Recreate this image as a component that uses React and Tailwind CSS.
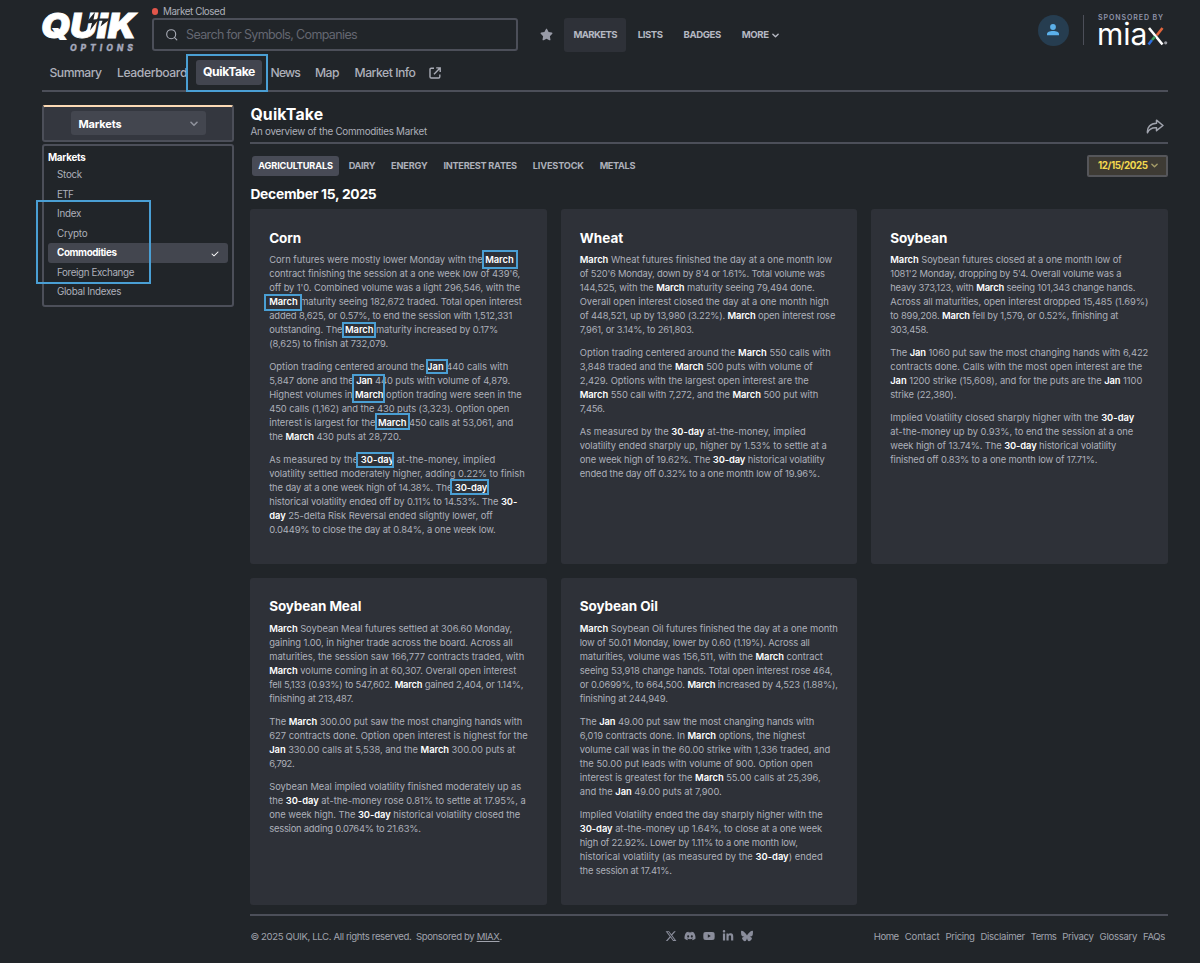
import React, { useLayoutEffect, useRef, useState } from "react";
import { FiSearch } from "react-icons/fi";
import {
  FaStar,
  FaCheck,
  FaDiscord,
  FaYoutube,
  FaLinkedinIn,
  FaXTwitter,
  FaBluesky,
} from "react-icons/fa6";

const navItems = [
  { label: "MARKETS", w: 43.5, active: true },
  { label: "LISTS", w: 25 },
  { label: "BADGES", w: 37.5 },
  { label: "MORE", w: 27, more: true },
];

const marketTypes = [
  { label: "Stock", w: 25 },
  { label: "ETF", w: 16 },
  { label: "Index", w: 24 },
  { label: "Crypto", w: 30.5 },
  { label: "Commodities", w: 59.5, active: true },
  { label: "Foreign Exchange", w: 77 },
  { label: "Global Indexes", w: 64 },
];

const tabs = [
  { label: "AGRICULTURALS", w: 74.5, active: true },
  { label: "DAIRY", w: 26.5 },
  { label: "ENERGY", w: 36.5 },
  { label: "INTEREST RATES", w: 73.5 },
  { label: "LIVESTOCK", w: 51 },
  { label: "METALS", w: 35.5 },
];

const footerLinks = [
  ["Home", 25],
  ["Contact", 35],
  ["Pricing", 29],
  ["Disclaimer", 44.5],
  ["Terms", 25.5],
  ["Privacy", 31.5],
  ["Glossary", 37.5],
  ["FAQs", 22],
];

// Each line is [text, width]; **word** is shown highlighted.
const reports = [
  {
    title: "Corn",
    titleWidth: 32,
    marked: true,
    paragraphs: [
      [
        ["Corn futures were mostly lower Monday with the **March**", 244.5],
        ["contract finishing the session at a one week low of 439'6,", 251],
        ["off by 1'0. Combined volume was a light 296,546, with the", 251],
        ["**March** maturity seeing 182,672 traded. Total open interest", 252.5],
        ["added 8,625, or 0.57%, to end the session with 1,512,331", 243],
        ["outstanding. The **March** maturity increased by 0.17%", 229],
        ["(8,625) to finish at 732,079.", 119],
      ],
      [
        ["Option trading centered around the **Jan** 440 calls with", 239],
        ["5,847 done and the **Jan** 440 puts with volume of 4,879.", 241],
        ["Highest volumes in **March** option trading were seen in the", 252.5],
        ["450 calls (1,162) and the 430 puts (3,323). Option open", 240],
        ["interest is largest for the **March** 450 calls at 53,061, and", 244],
        ["the **March** 430 puts at 28,720.", 132],
      ],
      [
        ["As measured by the **30-day** at-the-money, implied", 226],
        ["volatility settled moderately higher, adding 0.22% to finish", 255.5],
        ["the day at a one week high of 14.38%. The **30-day**", 218],
        ["historical volatility ended off by 0.11% to 14.53%. The **30-**", 248],
        ["**day** 25-delta Risk Reversal ended slightly lower, off", 223.5],
        ["0.0449% to close the day at 0.84%, a one week low.", 226.5],
      ],
    ],
  },
  {
    title: "Wheat",
    titleWidth: 43.5,
    paragraphs: [
      [
        ["**March** Wheat futures finished the day at a one month low", 252.5],
        ["of 520'6 Monday, down by 8'4 or 1.61%. Total volume was", 245],
        ["144,525, with the **March** maturity seeing 79,494 done.", 235],
        ["Overall open interest closed the day at a one month high", 249],
        ["of 448,521, up by 13,980 (3.22%). **March** open interest rose", 255.5],
        ["7,961, or 3.14%, to 261,803.", 114],
      ],
      [
        ["Option trading centered around the **March** 550 calls with", 251],
        ["3,848 traded and the **March** 500 puts with volume of", 233],
        ["2,429. Options with the largest open interest are the", 229],
        ["**March** 550 call with 7,272, and the **March** 500 put with", 238.5],
        ["7,456.", 25],
      ],
      [
        ["As measured by the **30-day** at-the-money, implied", 226],
        ["volatility ended sharply up, higher by 1.53% to settle at a", 247],
        ["one week high of 19.62%. The **30-day** historical volatility", 245],
        ["ended the day off 0.32% to a one month low of 19.96%.", 240],
      ],
    ],
  },
  {
    title: "Soybean",
    titleWidth: 57,
    paragraphs: [
      [
        ["**March** Soybean futures closed at a one month low of", 231.5],
        ["1081'2 Monday, dropping by 5'4. Overall volume was a", 231],
        ["heavy 373,123, with **March** seeing 101,343 change hands.", 245],
        ["Across all maturities, open interest dropped 15,485 (1.69%)", 258],
        ["to 899,208. **March** fell by 1,579, or 0.52%, finishing at", 228],
        ["303,458.", 38],
      ],
      [
        ["The **Jan** 1060 put saw the most changing hands with 6,422", 258],
        ["contracts done. Calls with the most open interest are the", 252],
        ["**Jan** 1200 strike (15,608), and for the puts are the **Jan** 1100", 252],
        ["strike (22,380).", 66],
      ],
      [
        ["Implied Volatility closed sharply higher with the **30-day**", 244],
        ["at-the-money up by 0.93%, to end the session at a one", 243],
        ["week high of 13.74%. The **30-day** historical volatility", 226],
        ["finished off 0.83% to a one month low of 17.71%.", 207],
      ],
    ],
  },
  {
    title: "Soybean Meal",
    titleWidth: 92,
    paragraphs: [
      [
        ["**March** Soybean Meal futures settled at 306.60 Monday,", 243],
        ["gaining 1.00, in higher trade across the board. Across all", 243.5],
        ["maturities, the session saw 166,777 contracts traded, with", 255],
        ["**March** volume coming in at 60,307. Overall open interest", 247],
        ["fell 5,133 (0.93%) to 547,602. **March** gained 2,404, or 1.14%,", 254],
        ["finishing at 213,487.", 84],
      ],
      [
        ["The **March** 300.00 put saw the most changing hands with", 253],
        ["627 contracts done. Option open interest is highest for the", 258.5],
        ["**Jan** 330.00 calls at 5,538, and the **March** 300.00 puts at", 246],
        ["6,792.", 25],
      ],
      [
        ["Soybean Meal implied volatility finished moderately up as", 252],
        ["the **30-day** at-the-money rose 0.81% to settle at 17.95%, a", 256.5],
        ["one week high. The **30-day** historical volatility closed the", 251],
        ["session adding 0.0764% to 21.63%.", 151.5],
      ],
    ],
  },
  {
    title: "Soybean Oil",
    titleWidth: 78,
    paragraphs: [
      [
        ["**March** Soybean Oil futures finished the day at a one month", 258],
        ["low of 50.01 Monday, lower by 0.60 (1.19%). Across all", 230],
        ["maturities, volume was 156,511, with the **March** contract", 243],
        ["seeing 53,918 change hands. Total open interest rose 464,", 253],
        ["or 0.0699%, to 664,500. **March** increased by 4,523 (1.88%),", 258],
        ["finishing at 244,949.", 88],
      ],
      [
        ["The **Jan** 49.00 put saw the most changing hands with", 234.5],
        ["6,019 contracts done. In **March** options, the highest", 225.5],
        ["volume call was in the 60.00 strike with 1,336 traded, and", 250.5],
        ["the 50.00 put leads with volume of 900. Option open", 233],
        ["interest is greatest for the **March** 55.00 calls at 25,396,", 241],
        ["and the **Jan** 49.00 puts at 7,900.", 142],
      ],
      [
        ["Implied Volatility ended the day sharply higher with the", 243],
        ["**30-day** at-the-money up 1.64%, to close at a one week", 242.5],
        ["high of 22.92%. Lower by 1.11% to a one month low,", 218],
        ["historical volatility (as measured by the **30-day**) ended", 243],
        ["the session at 17.41%.", 92],
      ],
    ],
  },
];

// Tracks the text in or out so that it fills exactly w pixels.
const Fit = ({ w, children, className = "" }) => {
  const ref = useRef(null);
  const [spacing, setSpacing] = useState(0);

  useLayoutEffect(() => {
    const el = ref.current;
    const natural = el.getBoundingClientRect().width;
    setSpacing((prev) => prev + (w - natural) / el.textContent.length);
  }, [w]);

  return (
    <span className={`block shrink-0 whitespace-nowrap ${className}`} style={{ width: w }}>
      <span ref={ref} style={{ letterSpacing: spacing }}>
        {children}
      </span>
    </span>
  );
};

const highlight = (text) =>
  text.split("**").map((part, i) =>
    i % 2 ? (
      <strong key={i} className="font-semibold text-white">
        {part}
      </strong>
    ) : (
      part
    )
  );

const Chevron = ({ className }) => (
  <svg viewBox="0 0 8 6" className={className} fill="none" stroke="currentColor" strokeWidth="1.6">
    <path d="M1 1.3 4 4.3 7 1.3" strokeLinecap="round" strokeLinejoin="round" />
  </svg>
);

const Logo = () => (
  <svg viewBox="0 0 96 42" className="mt-[11px] h-[42px] w-24 shrink-0 overflow-visible font-['Inter']">
    <text
      x="-1"
      y="26.5"
      textLength="95"
      lengthAdjust="spacingAndGlyphs"
      fill="#fff"
      stroke="#fff"
      strokeWidth="0.8"
      fontStyle="italic"
      fontWeight="900"
      fontSize="34"
    >
      QUIK
    </text>
    {/* bolt cut between the U and the I */}
    <path d="M43.5 12.5 53 1 51.500 8.500 57 8 48 19.500 50 12Z" fill="#212529" />
    <path d="M55 7.500H67L66 9.800 58.500 15.500 60.500 9.700H54.500Z" fill="#212529" />
    <text
      x="28"
      y="39.5"
      textLength="63"
      fill="#a3a7bb"
      stroke="#a3a7bb"
      strokeWidth="0.3"
      fontSize="8.6"
      fontStyle="italic"
      fontWeight="800"
    >
      OPTIONS
    </text>
  </svg>
);

const MiaxLogo = () => (
  <svg viewBox="0 0 70 26" className="h-[26px] w-[70px] overflow-visible font-['Inter']">
    <text x="-1" y="23.5" fill="#fff" fontSize="30" fontWeight="400" textLength="50.5" lengthAdjust="spacingAndGlyphs">
      mia
    </text>
    <path d="M51 7 64.500 23.500" stroke="#fff" strokeWidth="2.6" />
    <path d="M58.800 14.200 64.500 7" stroke="#e2653c" strokeWidth="2.6" />
    <path d="M50.500 23.500 54 19" stroke="#2f6fe0" strokeWidth="2.6" />
    <path d="M54 19 57 15.600" stroke="#3f9e62" strokeWidth="2.6" />
    <circle cx="67.7" cy="21.8" r="1.6" fill="#9a9ca3" />
  </svg>
);

const Header = () => (
  <header className="h-[92px] border-b-2 border-[#4c4f59]">
    <div className="flex h-[55px] items-start">
      <Logo />
      <div className="ml-[13.500px] w-[366px] pt-[5px]">
        <div className="flex h-[13px] items-center gap-[5px] text-[9.800px] leading-3">
          <span className="size-[6.500px] rounded-full bg-[#e2564b]" />
          <Fit w={62}>Market Closed</Fit>
        </div>
        <div className="flex h-[33px] items-center rounded-[3px] border-2 border-[#4c4f59] pl-[11px]">
          <FiSearch className="size-[13.500px] text-[#a9acb6]" />
          <Fit w={171} className="ml-2 pt-px text-[12.500px] text-[#646771]">
            Search for Symbols, Companies
          </Fit>
        </div>
      </div>
      <FaStar className="mt-7 ml-[22.500px] size-[13px] text-[#989ba7]" />
      <nav className="mt-[17.500px] ml-[11px] flex text-[9.600px] font-bold text-[#b5b8c2]">
        {navItems.map((item) => (
          <div
            key={item.label}
            className={`mr-0.5 flex h-[34px] items-center rounded-[3px] px-[9.400px] pt-0.5 ${
              item.active ? "bg-[#2e3138]" : ""
            }`}
          >
            <Fit w={item.w}>{item.label}</Fit>
            {item.more && <Chevron className="ml-[3px] w-[7px]" />}
          </div>
        ))}
      </nav>
      <div className="mt-[14.500px] ml-auto flex">
        <div className="flex size-[31px] items-center justify-center rounded-full bg-[#263d50]">
          <svg viewBox="0 0 12 12" className="size-3" fill="#5bb0ea">
            <circle cx="6" cy="3" r="2.9" />
            <path d="M0 11.300V10c0-2 2.500-3 6-3s6 1 6 3v1.300Z" />
          </svg>
        </div>
        <div className="ml-3.5 h-[30px] w-[1.500px] bg-[#4c4f59]" />
        <div className="ml-3.5 w-[70px]">
          <Fit w={66} className="text-[7px] leading-[6px] font-semibold text-[#8f94aa]">
            SPONSORED BY
          </Fit>
          <MiaxLogo />
        </div>
      </div>
    </div>
    <nav className="flex h-[35px] items-center text-[12.200px] font-medium">
      <Fit w={52} className="ml-[7.500px] pt-px">Summary</Fit>
      <Fit w={70} className="ml-[15.500px] pt-px">Leaderboard</Fit>
      <div className="relative ml-[9px] flex h-[25px] w-[66px] items-center justify-center rounded-[3px] bg-[#42454f] font-bold text-white">
        <Fit w={52}>QuikTake</Fit>
        <div className="absolute -top-[6px] -left-[10px] h-[38px] w-[82px] border-2 border-[#4a9fd4]" />
      </div>
      <Fit w={29.5} className="ml-[8.500px] pt-px">News</Fit>
      <Fit w={24} className="ml-[15px] pt-px">Map</Fit>
      <Fit w={61} className="ml-[15.500px] pt-px">Market Info</Fit>
      <svg
        viewBox="0 0 12 12"
        className="ml-[13.500px] size-3"
        fill="none"
        stroke="#a9acb6"
        strokeWidth="1.4"
      >
        <path d="M5 1.200H2.200a1.200 1.200 0 0 0-1.200 1.200v7.400A1.200 1.200 0 0 0 2.200 11h7.400a1.200 1.200 0 0 0 1.200-1.200V7.500" />
        <path d="M7.200.900h4v4M11 1.100 5 7.200" />
      </svg>
    </nav>
  </header>
);

const Sidebar = () => (
  <aside className="w-48 shrink-0 pt-[12.500px]">
    <div className="flex h-[37.500px] items-center justify-center rounded-[3px] border-2 border-t-[2.500px] border-[#4c4f59] border-t-[#fbd9b4] bg-[#34373f]">
      <div className="flex h-6 w-[135px] items-center justify-between rounded-[3px] bg-[#43464f] px-2 pt-px text-[11px] font-bold text-white">
        <Fit w={43}>Markets</Fit>
        <Chevron className="w-2 text-[#8f929c]" />
      </div>
    </div>
    <div className="relative mt-0.5 h-[163px] rounded-[3px] border-2 border-[#4c4f59] px-1 pt-1">
      <Fit w={37.5} className="text-[9.800px] leading-[15px] font-bold text-white">
        Markets
      </Fit>
      {marketTypes.map((type) => (
        <div
          key={type.label}
          className={`flex h-[19.500px] items-center justify-between rounded-[3px] px-[9px] pt-0.5 text-[9.800px] ${
            type.active ? "bg-[#43464f] font-bold text-white" : ""
          }`}
        >
          <Fit w={type.w}>{type.label}</Fit>
          {type.active && <FaCheck className="size-2" />}
        </div>
      ))}
      <div className="absolute top-[54px] -left-[8px] h-[84px] w-[115px] border-2 border-[#4a9fd4]" />
    </div>
  </aside>
);

const CornMarks = () => (
  <>
    <div className="absolute top-[41px] left-[232px] h-[19px] w-9 border-2 border-[#4a9fd4]" />
    <div className="absolute top-[85px] left-[13.500px] h-[17px] w-[38px] border-2 border-[#4a9fd4]" />
    <div className="absolute top-[113px] left-[92px] h-4 w-[33.500px] border-2 border-[#4a9fd4]" />
    <div className="absolute top-[150px] left-[176px] h-[15px] w-[21.500px] border-2 border-[#4a9fd4]" />
    <div className="absolute top-[164.500px] left-[102px] h-[29px] w-[33px] border-2 border-[#4a9fd4]" />
    <div className="absolute top-[204px] left-[125px] h-[17px] w-[35px] border-2 border-[#4a9fd4]" />
    <div className="absolute top-[243px] left-[106px] h-[16px] w-[38px] border-2 border-[#4a9fd4]" />
    <div className="absolute top-[270px] left-[200px] h-[16px] w-[38.500px] border-2 border-[#4a9fd4]" />
  </>
);

const ReportCard = ({ report }) => (
  <article className="relative rounded-[3px] bg-[#2e3138] px-[18.800px] pt-[18.500px] text-[9.400px] leading-[13.960px]">
    <Fit w={report.titleWidth} className="text-[13.500px] leading-5 font-bold text-white">
      {report.title}
    </Fit>
    <div className="mt-[5.800px] space-y-[9.300px]">
      {report.paragraphs.map((lines, i) => (
        <p key={i}>
          {lines.map(([text, w]) => (
            <Fit key={text} w={w}>
              {highlight(text)}
            </Fit>
          ))}
        </p>
      ))}
    </div>
    {report.marked && <CornMarks />}
  </article>
);

const Footer = () => (
  <footer className="mt-[9px] flex h-11 items-center border-t-2 border-[#4c4f59] text-[9.600px] text-[#a0a3ad]">
    <Fit w={161} className="pt-0.5">© 2025 QUIK, LLC. All rights reserved.</Fit>
    <Fit w={86} className="ml-[4.500px] pt-0.5">
      Sponsored by <span className="underline">MIAX</span>.
    </Fit>
    <div className="ml-[163.500px] flex items-center gap-[6.900px] pb-0.5 text-[#8a8d9b]">
      <FaXTwitter className="size-3" />
      <FaDiscord className="size-3" />
      <FaYoutube className="size-3" />
      <FaLinkedinIn className="size-3" />
      <FaBluesky className="size-3" />
    </div>
    <div className="mr-[3px] ml-auto flex gap-[5.900px] pt-0.5">
      {footerLinks.map(([label, w]) => (
        <Fit key={label} w={w}>{label}</Fit>
      ))}
    </div>
  </footer>
);

const App = () => {
  return (
    <div className="h-[963px] overflow-hidden bg-[#212529] pr-8 pl-[42px] font-['Inter',sans-serif] text-[#adb0ba]">
      <Header />
      <div className="flex">
        <Sidebar />
        <main className="ml-[16.400px] w-[917.600px] pt-3">
          <div className="flex h-10 items-end justify-between border-b-2 border-[#4c4f59]">
            <div className="pb-[4px]">
              <Fit w={73} className="text-[15.800px] leading-5 font-bold text-white">QuikTake</Fit>
              <Fit w={176.5} className="text-[9.800px] leading-[13px]">
                An overview of the Commodities Market
              </Fit>
            </div>
            <svg
              viewBox="0 0 18 15"
              className="mr-1 mb-[8px] h-[15px] w-[18px]"
              fill="none"
              stroke="#a0a3ad"
              strokeWidth="1.5"
              strokeLinejoin="round"
            >
              <path d="M10.500 1.200 17 6.500 10.500 11.700V8.800C5.500 8.500 3 10 1.500 13.800.800 8.500 4.500 4.300 10.500 4.300Z" />
            </svg>
          </div>
          <div className="mt-[11px] flex h-[21px] items-center">
            <div className="ml-[1.200px] flex gap-[2.500px] text-[9.200px] font-bold">
              {tabs.map((tab) => (
                <div
                  key={tab.label}
                  className={`flex h-5 items-center rounded-[3px] px-[6.700px] ${
                    tab.active ? "bg-[#484b56] text-white" : ""
                  }`}
                >
                  <Fit w={tab.w}>{tab.label}</Fit>
                </div>
              ))}
            </div>
            <div className="ml-auto flex h-[22px] w-[81px] items-center rounded-[2px] border-2 border-[#55565a] bg-[#3e3b34] pt-px pl-[9px] text-[9.800px] font-bold text-[#f4d94f]">
              <Fit w={49.5}>12/15/2025</Fit>
              <Chevron className="ml-[3.500px] w-[7px] text-[#a59c68]" />
            </div>
          </div>
          <Fit w={126} className="mt-[7.500px] text-[13.800px] leading-5 font-bold text-white">
            December 15, 2025
          </Fit>
          <div className="mt-[5.500px] grid grid-cols-3 grid-rows-[354.500px_327px] gap-x-3.5 gap-y-3.5">
            {reports.map((report) => (
              <ReportCard key={report.title} report={report} />
            ))}
          </div>
          <Footer />
        </main>
      </div>
    </div>
  );
};

export default App;
